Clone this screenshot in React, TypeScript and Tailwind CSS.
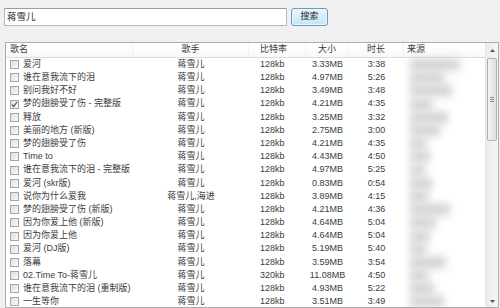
import React from "react";

interface Song {
  name: string;
  singer: string;
  bitrate: string;
  size: string;
  duration: string;
  checked?: boolean;
  blob: number;
}

const songs: Song[] = [
  { name: "爱河", singer: "蒋雪儿", bitrate: "128kb", size: "3.33MB", duration: "3:38", blob: 50 },
  { name: "谁在意我流下的泪", singer: "蒋雪儿", bitrate: "128kb", size: "4.97MB", duration: "5:26", blob: 34 },
  { name: "别问我好不好", singer: "蒋雪儿", bitrate: "128kb", size: "3.49MB", duration: "3:48", blob: 42 },
  { name: "梦的翅膀受了伤 - 完整版", singer: "蒋雪儿", bitrate: "128kb", size: "4.21MB", duration: "4:35", checked: true, blob: 22 },
  { name: "释放", singer: "蒋雪儿", bitrate: "128kb", size: "3.25MB", duration: "3:32", blob: 38 },
  { name: "美丽的地方 (新版)", singer: "蒋雪儿", bitrate: "128kb", size: "2.75MB", duration: "3:00", blob: 30 },
  { name: "梦的翅膀受了伤", singer: "蒋雪儿", bitrate: "128kb", size: "4.21MB", duration: "4:35", blob: 16 },
  { name: "Time to", singer: "蒋雪儿", bitrate: "128kb", size: "4.43MB", duration: "4:50", blob: 20 },
  { name: "谁在意我流下的泪 - 完整版", singer: "蒋雪儿", bitrate: "128kb", size: "4.97MB", duration: "5:25", blob: 15 },
  { name: "爱河 (skr版)", singer: "蒋雪儿", bitrate: "128kb", size: "0.83MB", duration: "0:54", blob: 22 },
  { name: "说你为什么爱我", singer: "蒋雪儿,海进", bitrate: "128kb", size: "3.89MB", duration: "4:15", blob: 18 },
  { name: "梦的翅膀受了伤 (新版)", singer: "蒋雪儿", bitrate: "128kb", size: "4.21MB", duration: "4:36", blob: 40 },
  { name: "因为你爱上他 (新版)", singer: "蒋雪儿", bitrate: "128kb", size: "4.64MB", duration: "5:04", blob: 26 },
  { name: "因为你爱上他", singer: "蒋雪儿", bitrate: "128kb", size: "4.64MB", duration: "5:04", blob: 20 },
  { name: "爱河 (DJ版)", singer: "蒋雪儿", bitrate: "128kb", size: "5.19MB", duration: "5:40", blob: 16 },
  { name: "落幕", singer: "蒋雪儿", bitrate: "128kb", size: "3.59MB", duration: "3:54", blob: 36 },
  { name: "02.Time To-蒋雪儿", singer: "蒋雪儿", bitrate: "320kb", size: "11.08MB", duration: "4:50", blob: 18 },
  { name: "谁在意我流下的泪 (重制版)", singer: "蒋雪儿", bitrate: "128kb", size: "4.93MB", duration: "5:22", blob: 24 },
  { name: "一生等你", singer: "蒋雪儿", bitrate: "128kb", size: "3.51MB", duration: "3:49", blob: 34 },
];

const Checkbox = ({ checked }: { checked?: boolean }) => (
  <div className="w-[9px] h-[9px] border border-[#a5a5a5] bg-gradient-to-br from-[#dedede] to-[#fbfbfb] flex items-center justify-center shrink-0">
    {checked && (
      <svg width="7" height="7" viewBox="0 0 7 7">
        <path d="M1 3.5 L2.8 5.5 L6 1" stroke="#4a5a78" strokeWidth="1.2" fill="none" />
      </svg>
    )}
  </div>
);

export default function App() {
  return (
    <div
      className="w-[500px] h-[308px] bg-[#f0f0f0] overflow-hidden text-[9px] text-[#3c3c3c]"
      style={{ fontFamily: '"Liberation Sans", "Noto Sans CJK SC", sans-serif' }}
    >
      <div className="flex items-center pt-[8px] pl-[4px]">
        <div className="w-[283px] h-[18px] bg-white border border-[#b5b7bc] border-t-[#9a9da2] flex items-center pl-[2px] text-[9.5px] text-[#2a2a2a]">
          蒋雪儿
        </div>
        <div className="ml-[4px] w-[37px] h-[18px] rounded-[3px] border border-[#6a9cc2] bg-gradient-to-b from-[#eaf6fd] to-[#c4e5f6] flex items-center justify-center text-[#2a2a2a] shadow-[inset_0_0_0_1px_#e8f5fc]">
          搜索
        </div>
      </div>

      <div className="mt-[16px] ml-[5px] w-[494px] h-[266px] border border-[#acacac] bg-white flex overflow-hidden">
        <div className="w-[479px] flex flex-col">
          <div className="h-[15px] flex items-center border-b border-[#dcdcdc] bg-gradient-to-b from-white to-[#f7f8fa] shrink-0">
            <div className="w-[127px] h-full pl-[4px] flex items-center border-r border-[#efefef]">歌名</div>
            <div className="w-[116px] h-full flex items-center justify-center border-r border-[#f2f2f2]">歌手</div>
            <div className="w-[57px] h-full pl-[11px] flex items-center border-r border-[#f2f2f2]">比特率</div>
            <div className="w-[43px] h-full flex items-center justify-center border-r border-[#f2f2f2]">大小</div>
            <div className="w-[55px] h-full flex items-center justify-center border-r border-[#f2f2f2]">时长</div>
            <div className="flex-1 h-full pl-[3px] flex items-center">来源</div>
          </div>
          {songs.map((s, i) => (
            <div key={i} className="h-[13.2px] flex items-center shrink-0">
              <div className="w-[127px] pl-[4px] flex items-center gap-[4px] whitespace-nowrap">
                <Checkbox checked={s.checked} />
                <span>{s.name}</span>
              </div>
              <div className="w-[116px] text-center whitespace-nowrap">{s.singer}</div>
              <div className="w-[57px] pl-[11px]">{s.bitrate}</div>
              <div className="w-[43px] text-center whitespace-nowrap">{s.size}</div>
              <div className="w-[55px] text-center">{s.duration}</div>
              <div className="flex-1 pl-[6px] flex items-center">
                <div className="h-[11px] bg-[#d0d0d0] blur-[4px]" style={{ width: s.blob }} />
              </div>
            </div>
          ))}
        </div>

        <div className="w-[13px] h-full bg-gradient-to-r from-[#ebebeb] to-[#f6f6f6] border-l border-[#e6e6e6] flex flex-col items-center">
          <div className="h-[15px] w-full flex items-center justify-center shrink-0">
            <svg width="5" height="3" viewBox="0 0 5 3">
              <path d="M0 3 L2.5 0 L5 3 Z" fill="#555" />
            </svg>
          </div>
          <div className="w-[10px] h-[83px] rounded-[2px] border border-[#b0b0b0] bg-gradient-to-r from-[#f3f3f3] to-[#e0e0e0] flex flex-col items-center justify-center gap-[1px] shrink-0">
            <div className="w-[4px] h-px bg-[#888]" />
            <div className="w-[4px] h-px bg-[#888]" />
            <div className="w-[4px] h-px bg-[#888]" />
          </div>
          <div className="flex-1" />
          <div className="h-[12px] w-full flex items-center justify-center shrink-0">
            <svg width="5" height="3" viewBox="0 0 5 3">
              <path d="M0 0 L2.5 3 L5 0 Z" fill="#555" />
            </svg>
          </div>
        </div>
      </div>
    </div>
  );
}
